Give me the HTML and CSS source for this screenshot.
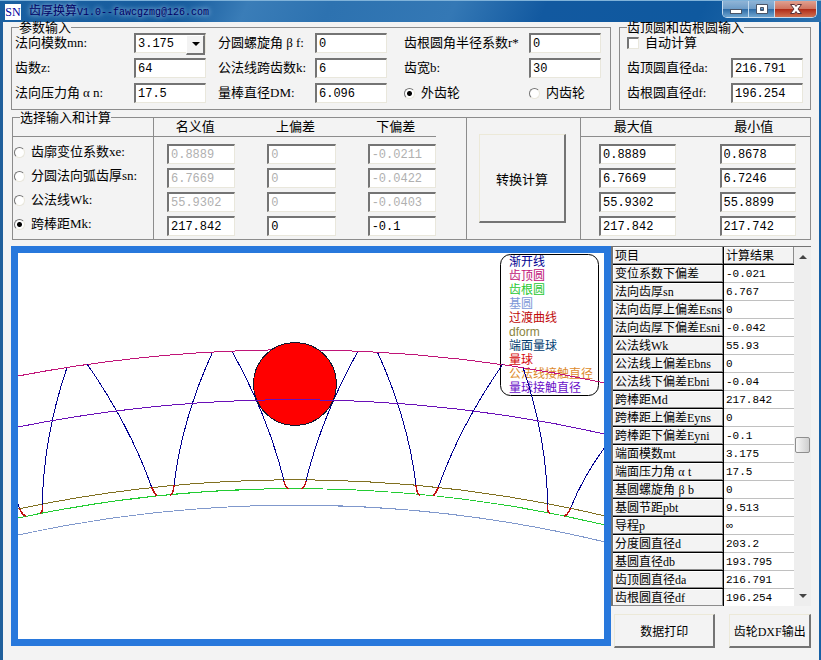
FILE: index.html
```html
<!DOCTYPE html>
<html lang="zh-CN">
<head>
    <meta charset="UTF-8">
    <meta name="viewport" content="width=device-width, initial-scale=1.0">
    <title>齿厚换算V1.0</title>
    <link rel="stylesheet" href="styles.css">
</head>
<body>
    <div class="window">
        <header class="title-bar">
            <span class="app-icon">SN</span>
            <h1>齿厚换算<span class="version">V1.0--fawcgzmg@126.com</span></h1>
            <div class="window-buttons">
                <button type="button" class="win-btn" aria-label="最小化">
                    <svg width="14" height="14" viewBox="0 0 14 14"><rect x="1.5" y="7.5" width="11" height="4" fill="#fff" stroke="#4a5568"/></svg>
                </button>
                <button type="button" class="win-btn" aria-label="最大化">
                    <svg width="14" height="14" viewBox="0 0 14 14"><path d="M1.5 2.5h11v9h-11zM5.5 5.5h3v3h-3z" fill="#fff" fill-rule="evenodd" stroke="#4a5568"/></svg>
                </button>
                <button type="button" class="win-btn close" aria-label="关闭">
                    <svg width="14" height="14" viewBox="0 0 14 14"><path d="M1.5 2.5h4l1.500 2 1.500-2h4l-3.500 4.500 3.500 4.500h-4l-1.500-2-1.500 2h-4l3.500-4.500z" fill="#fff" stroke="#5a3038"/></svg>
                </button>
            </div>
        </header>

        <main class="client">
            <div class="top-row">
                <fieldset class="group">
                    <legend>参数输入</legend>
                    <div class="params">
                        <label for="mn">法向模数mn:</label>
                        <span class="select-box">
                            <select id="mn"><option>3.175</option></select>
                        </span>
                        <label for="bf" class="second">分圆螺旋角<span class="greek">β</span>f:</label>
                        <input type="text" id="bf" value="0">
                        <label for="rr" class="third">齿根圆角半径系数r*</label>
                        <input type="text" id="rr" value="0">

                        <label for="z">齿数z:</label>
                        <input type="text" id="z" value="64">
                        <label for="k" class="second">公法线跨齿数k:</label>
                        <input type="text" id="k" value="6">
                        <label for="b" class="third">齿宽b:</label>
                        <input type="text" id="b" value="30">

                        <label for="an">法向压力角<span class="greek">α</span>n:</label>
                        <input type="text" id="an" value="17.5">
                        <label for="dm" class="second">量棒直径DM:</label>
                        <input type="text" id="dm" value="6.096">
                        <label class="third choice"><input type="radio" name="gear" checked>外齿轮</label>
                        <label class="choice"><input type="radio" name="gear">内齿轮</label>
                    </div>
                </fieldset>

                <fieldset class="group">
                    <legend>齿顶圆和齿根圆输入</legend>
                    <div class="circles">
                        <label class="choice auto"><input type="checkbox">自动计算</label>
                        <label for="da">齿顶圆直径da:</label>
                        <input type="text" id="da" value="216.791">
                        <label for="df">齿根圆直径df:</label>
                        <input type="text" id="df" value="196.254">
                    </div>
                </fieldset>
            </div>

            <fieldset class="group calc">
                <legend>选择输入和计算</legend>
                <div class="panels">
                    <div class="panel modes">
                        <div class="panel-head"></div>
                        <div class="rows">
                            <label class="choice"><input type="radio" name="mode">齿廓变位系数xe:</label>
                            <label class="choice"><input type="radio" name="mode">分圆法向弧齿厚sn:</label>
                            <label class="choice"><input type="radio" name="mode">公法线Wk:</label>
                            <label class="choice"><input type="radio" name="mode" checked>跨棒距Mk:</label>
                        </div>
                    </div>

                    <div class="panel values">
                        <div class="panel-head">
                            <span>名义值</span><span>上偏差</span><span>下偏差</span>
                        </div>
                        <div class="rows">
                            <input type="text" value="0.8889" aria-label="xe 名义值" disabled>
                            <input type="text" value="0" aria-label="xe 上偏差" disabled>
                            <input type="text" value="-0.0211" aria-label="xe 下偏差" disabled>
                            <input type="text" value="6.7669" aria-label="sn 名义值" disabled>
                            <input type="text" value="0" aria-label="sn 上偏差" disabled>
                            <input type="text" value="-0.0422" aria-label="sn 下偏差" disabled>
                            <input type="text" value="55.9302" aria-label="Wk 名义值" disabled>
                            <input type="text" value="0" aria-label="Wk 上偏差" disabled>
                            <input type="text" value="-0.0403" aria-label="Wk 下偏差" disabled>
                            <input type="text" value="217.842" aria-label="Mk 名义值">
                            <input type="text" value="0" aria-label="Mk 上偏差">
                            <input type="text" value="-0.1" aria-label="Mk 下偏差">
                        </div>
                    </div>

                    <div class="panel convert">
                        <button type="button" class="btn">转换计算</button>
                    </div>

                    <div class="panel limits">
                        <div class="panel-head">
                            <span>最大值</span><span>最小值</span>
                        </div>
                        <div class="rows">
                            <input type="text" value="0.8889" aria-label="xe 最大值">
                            <input type="text" value="0.8678" aria-label="xe 最小值">
                            <input type="text" value="6.7669" aria-label="sn 最大值">
                            <input type="text" value="6.7246" aria-label="sn 最小值">
                            <input type="text" value="55.9302" aria-label="Wk 最大值">
                            <input type="text" value="55.8899" aria-label="Wk 最小值">
                            <input type="text" value="217.842" aria-label="Mk 最大值">
                            <input type="text" value="217.742" aria-label="Mk 最小值">
                        </div>
                    </div>
                </div>
            </fieldset>

            <div class="bottom-row">
                <div class="drawing">
                    <svg viewBox="0 0 586 386">
                        <defs>
                            <g id="flanks">
                                <g class="involute">
                                    <path d="M48.700 115.300Q25.500 184 24.300 252"/>
                                    <path d="M69.300 111.300Q112 173 133.700 234.300"/>
                                    <path d="M194.300 99.700Q164 166 156 232"/>
                                    <path d="M214.300 98.700Q250 163 266 227.700"/>
                                    <path d="M-32 195.300Q-10.600 225 1.300 254.700"/>
                                </g>
                                <g class="fillet">
                                    <path d="M24.300 252Q25 260 21.700 260.500"/>
                                    <path d="M133.700 234.300Q136 240 138.700 243"/>
                                    <path d="M156 232Q155.500 241 152.300 242"/>
                                    <path d="M266 227.700Q267 234 270.700 235.700"/>
                                    <path d="M1.300 254.700Q4 262 8 263"/>
                                </g>
                            </g>
                        </defs>

                        <!-- 图例 -->
                        <rect class="legend-box" x="482.5" y="1.5" width="98" height="141" rx="10"/>
                        <g class="legend-text">
                            <text x="491" y="13" fill="#000090">渐开线</text>
                            <text x="491" y="27" fill="#c01478">齿顶圆</text>
                            <text x="491" y="41" fill="#1fc832">齿根圆</text>
                            <text x="491" y="55" fill="#8098d8">基圆</text>
                            <text x="491" y="69" fill="#c00808">过渡曲线</text>
                            <text x="491" y="83" fill="#8a8440">dform</text>
                            <text x="491" y="97" fill="#003c70">端面量球</text>
                            <text x="491" y="111" fill="#d40808">量球</text>
                            <text x="491" y="125" fill="#dd8a2c">公法线接触直径</text>
                            <text x="491" y="139" fill="#6a10c8">量球接触直径</text>
                        </g>

                        <path class="arc base" d="M0 282A1312 1312 0 0 1 587 289"/>
                        <path class="arc root" d="M0 265A1329 1329 0 0 1 587 272"/>
                        <path class="arc dform" d="M0 256A1338 1338 0 0 1 587 263"/>
                        <path class="arc tip" d="M0 123A1468 1468 0 0 1 587 130"/>
                        <use href="#flanks"/>
                        <use href="#flanks" transform="translate(554 0) scale(-1 1)"/>
                        <circle class="ball" cx="277" cy="131" r="41.5"/>
                        <path class="arc contact" d="M0 174A1417 1417 0 0 1 587 181"/>
                    </svg>
                </div>

                <div class="side">
                    <div class="grid-box">
                        <table>
                            <thead>
                                <tr><th>项目</th><th class="result">计算结果</th></tr>
                            </thead>
                            <tbody>
                                <tr><th>变位系数下偏差</th><td>-0.021</td></tr>
                                <tr><th>法向齿厚sn</th><td>6.767</td></tr>
                                <tr><th>法向齿厚上偏差Esns</th><td>0</td></tr>
                                <tr><th>法向齿厚下偏差Esni</th><td>-0.042</td></tr>
                                <tr><th>公法线Wk</th><td>55.93</td></tr>
                                <tr><th>公法线上偏差Ebns</th><td>0</td></tr>
                                <tr><th>公法线下偏差Ebni</th><td>-0.04</td></tr>
                                <tr><th>跨棒距Md</th><td>217.842</td></tr>
                                <tr><th>跨棒距上偏差Eyns</th><td>0</td></tr>
                                <tr><th>跨棒距下偏差Eyni</th><td>-0.1</td></tr>
                                <tr><th>端面模数mt</th><td>3.175</td></tr>
                                <tr><th>端面压力角<span class="greek">α</span>t</th><td>17.5</td></tr>
                                <tr><th>基圆螺旋角<span class="greek">β</span>b</th><td>0</td></tr>
                                <tr><th>基圆节距pbt</th><td>9.513</td></tr>
                                <tr><th>导程p</th><td>∞</td></tr>
                                <tr><th>分度圆直径d</th><td>203.2</td></tr>
                                <tr><th>基圆直径db</th><td>193.795</td></tr>
                                <tr><th>齿顶圆直径da</th><td>216.791</td></tr>
                                <tr><th>齿根圆直径df</th><td>196.254</td></tr>
                            </tbody>
                        </table>
                        <div class="scrollbar">
                            <span class="arrow up"></span>
                            <span class="thumb"></span>
                            <span class="arrow down"></span>
                        </div>
                    </div>
                    <div class="actions">
                        <button type="button" class="btn">数据打印</button>
                        <button type="button" class="btn">齿轮DXF输出</button>
                    </div>
                </div>
            </div>
        </main>
    </div>
</body>
</html>
```

FILE: styles.css
```css
* {
    box-sizing: border-box;
}
body {
    margin: 0;
    background: #f3f3f3;
    color: #000;
    font-family: "Liberation Serif", "Noto Sans CJK SC", serif;
    font-size: 13px;
    line-height: 18px;
}
.window {
    min-height: 100vh;
    border-left: 3px solid #1f5f9b;
    border-right: 2px solid #1760a5;
}

/* title bar */
.title-bar {
    display: flex;
    align-items: center;
    height: 22px;
    margin: 0 -2px 0 -3px;
    padding: 0 4px 0 5px;
    border-top: 1px solid #7fb2d9;
    background: linear-gradient(115deg, #1a60a0 0%, #175c9e 22%, #3a7db8 30%, #2d72b0 40%, #3478b5 55%, #1259a0 66%, #0f599f 85%, #2a70ae 100%);
}
.app-icon {
    width: 16px;
    height: 16px;
    background: #fff;
    color: #0000a0;
    font-size: 12px;
    line-height: 16px;
    text-align: center;
}
.title-bar h1 {
    flex: 1;
    margin: 0 0 0 8px;
    color: #000064;
    font-size: 12px;
    font-weight: normal;
    text-shadow: 0 0 4px #8db8dc, 0 0 6px #8db8dc;
}
.version {
    font-family: "Liberation Mono", monospace;
    font-size: 10px;
}
.window-buttons {
    display: flex;
    align-self: flex-start;
    border: 1px solid #c5dcf0;
    border-top: 0;
    border-radius: 0 0 5px 5px;
    overflow: hidden;
}
.win-btn {
    display: flex;
    align-items: center;
    justify-content: center;
    width: 26px;
    height: 16px;
    padding: 0;
    border: 0;
    border-right: 1px solid #c5dcf0;
    background: linear-gradient(#8fb4d6 0%, #6f9dc8 48%, #2f6ca6 52%, #6fa5d0 100%);
}
.win-btn.close {
    width: 41px;
    border-right: 0;
    background: linear-gradient(#e0a090 0%, #d07460 48%, #b02c18 52%, #d07050 100%);
}

.client {
    padding: 0 8px 12px;
}

/* group boxes */
.group {
    min-width: 0;
    margin: 0;
    padding: 0 3px 6px;
    border: 1px solid #8c8c8c;
}
.group legend {
    margin-left: 4px;
    padding: 0;
    line-height: 11px;
}
.top-row {
    display: grid;
    grid-template-columns: minmax(0, 600fr) minmax(0, 192fr);
    gap: 8px;
}
.params,
.circles {
    display: grid;
    grid-auto-rows: 20px;
    row-gap: 5px;
    align-items: center;
    white-space: nowrap;
}
.params {
    grid-template-columns: minmax(0, 119fr) minmax(0, 72fr) minmax(0, 109fr) minmax(0, 72fr) minmax(0, 142fr) minmax(0, 72fr);
    padding-right: 6px;
}
.params .second {
    padding-left: 12px;
}
.params .third {
    padding-left: 17px;
}
.circles {
    grid-template-columns: minmax(0, 104fr) minmax(0, 72fr);
    padding: 0 4px;
}
.auto {
    grid-column: 1 / 3;
}
.greek {
    display: inline-block;
    width: 13px;
    text-align: center;
}

/* controls */
input[type="text"],
select {
    width: 100%;
    height: 20px;
    padding: 0 0 0 2px;
    border: 2px solid #747474;
    border-right: 1px solid #e9e7dc;
    border-bottom: 1px solid #e9e7dc;
    border-radius: 0;
    background: #fff;
    color: #000;
    font-family: "Liberation Mono", "Noto Sans CJK SC", monospace;
    font-size: 12px;
}
input[type="text"]:disabled {
    color: #b0b0b0;
}
select {
    appearance: none;
}
.select-box {
    position: relative;
    display: block;
    height: 20px;
}
.select-box::before {
    content: "";
    position: absolute;
    top: 2px;
    right: 1px;
    width: 16px;
    height: 17px;
    border: 1px solid #fff;
    border-right: 2px solid #747474;
    border-bottom: 2px solid #747474;
    background: #f3f3f3;
    pointer-events: none;
}
.select-box::after {
    content: "";
    position: absolute;
    top: 9px;
    right: 6px;
    border: 4px solid transparent;
    border-top-color: #000;
    border-bottom: 0;
    pointer-events: none;
}
.choice {
    display: flex;
    align-items: center;
    gap: 6px;
    white-space: nowrap;
}
input[type="radio"],
input[type="checkbox"] {
    appearance: none;
    flex: none;
    width: 11px;
    height: 11px;
    margin: 0;
    border: 1px solid #747474;
    border-right-color: #e9e7dc;
    border-bottom-color: #e9e7dc;
    background: #fff;
}
input[type="radio"] {
    border-radius: 50%;
}
input[type="radio"]:checked {
    background: radial-gradient(circle, #000 2px, #fff 3px);
}
input[type="checkbox"] {
    width: 12px;
    height: 12px;
    border-width: 2px 1px 1px 2px;
}
.btn {
    padding: 0;
    border: 1px solid #ece9d8;
    border-right: 2px solid #747474;
    border-bottom: 2px solid #747474;
    background: #f3f3f3;
    color: #000;
    font-family: inherit;
    font-size: 13px;
}

/* conversion panel */
.calc {
    margin: 2px 0 0 1px;
    padding: 0;
}
.calc legend {
    margin-left: 7px;
}
.panels {
    display: grid;
    grid-template-columns: minmax(0, 141fr) minmax(0, 313fr) minmax(0, 114fr) minmax(0, 229fr);
    margin-top: -5px;
}
.panel {
    border-right: 1px solid #8c8c8c;
}
.panel:last-child {
    border-right: 0;
}
.panel-head {
    display: grid;
    height: 19px;
    border-bottom: 1px solid #8c8c8c;
    text-align: center;
}
.rows {
    display: grid;
    grid-auto-rows: 20px;
    row-gap: 4px;
    padding: 7px 0 3px 1px;
}
.modes .rows {
    padding-top: 5px;
}
.values .panel-head,
.values .rows {
    grid-template-columns: repeat(3, minmax(0, 1fr));
    column-gap: 32px;
    margin-right: 30px;
    padding-left: 13px;
}
.values .panel-head span {
    padding-right: 12px;
}
.limits .panel-head,
.limits .rows {
    grid-template-columns: repeat(2, minmax(0, 1fr));
    column-gap: 44px;
    padding-left: 18px;
    padding-right: 14px;
}
.limits .panel-head span {
    padding-right: 8px;
}
.convert {
    display: flex;
    padding: 16px 14px 16px 12px;
}
.convert .btn {
    flex: 1;
}

/* drawing */
.bottom-row {
    display: grid;
    grid-template-columns: minmax(0, 3fr) minmax(0, 1fr);
    align-items: start;
    margin-top: 6px;
}
.drawing {
    border: 7px solid #2878dc;
    background: #fff;
}
.drawing svg {
    display: block;
    width: 100%;
}
.arc,
.involute,
.fillet {
    fill: none;
    stroke-width: 1;
    shape-rendering: crispEdges;
}
.involute { stroke: #000090; }
.fillet { stroke: #c01010; stroke-width: 1.5; }
.tip { stroke: #c01478; }
.root { stroke: #22cc33; }
.base { stroke: #8098cc; }
.dform { stroke: #807020; }
.contact { stroke: #6a10b8; }
.ball {
    fill: #f00;
    stroke: #101830;
    shape-rendering: crispEdges;
}
.legend-box {
    fill: none;
    stroke: #000;
}
.legend-text {
    font-family: "Liberation Sans", "Noto Sans CJK SC", sans-serif;
    font-size: 12px;
}

/* result grid */
.grid-box {
    display: flex;
    height: 360px;
    border-top: 1px solid #747474;
    border-left: 2px solid #747474;
    overflow: hidden;
}
table {
    flex: 1;
    min-width: 0;
    table-layout: fixed;
    border-collapse: separate;
    border-spacing: 0;
    font-size: 12px;
}
tr {
    height: 18px;
}
th,
td {
    height: 18px;
    padding: 0 0 0 2px;
    line-height: 16px;
    text-align: left;
    white-space: nowrap;
    overflow: hidden;
}
th {
    border-right: 1px solid #000;
    border-bottom: 1px solid #000;
    background: #f3f3f3;
    box-shadow: inset -1px -1px #8c8c8c, inset 1px 1px #fff;
    font-weight: normal;
}
.result {
    width: 70px;
    border-right: 0;
}
td {
    border-bottom: 1px solid #c0c0c0;
    background: #fff;
    font-family: "Liberation Mono", monospace;
    font-size: 11px;
}
.scrollbar {
    display: flex;
    flex-direction: column;
    align-items: center;
    width: 17px;
    padding: 8px 0;
    background: #eee;
}
.arrow {
    border: 4px solid transparent;
}
.arrow.up {
    border-top: 0;
    border-bottom-color: #444;
}
.arrow.down {
    margin-top: auto;
    border-bottom: 0;
    border-top-color: #444;
}
.thumb {
    width: 15px;
    height: 16px;
    margin-top: 178px;
    border: 1px solid #8e8e8e;
    border-radius: 2px;
    background: linear-gradient(90deg, #f6f6f6, #cfcfcf);
}
.actions {
    display: grid;
    grid-template-columns: minmax(0, 102fr) minmax(0, 82fr);
    gap: 14px;
    margin-top: 8px;
    padding-left: 3px;
}
.actions .btn {
    height: 34px;
    font-size: 12px;
}
```
